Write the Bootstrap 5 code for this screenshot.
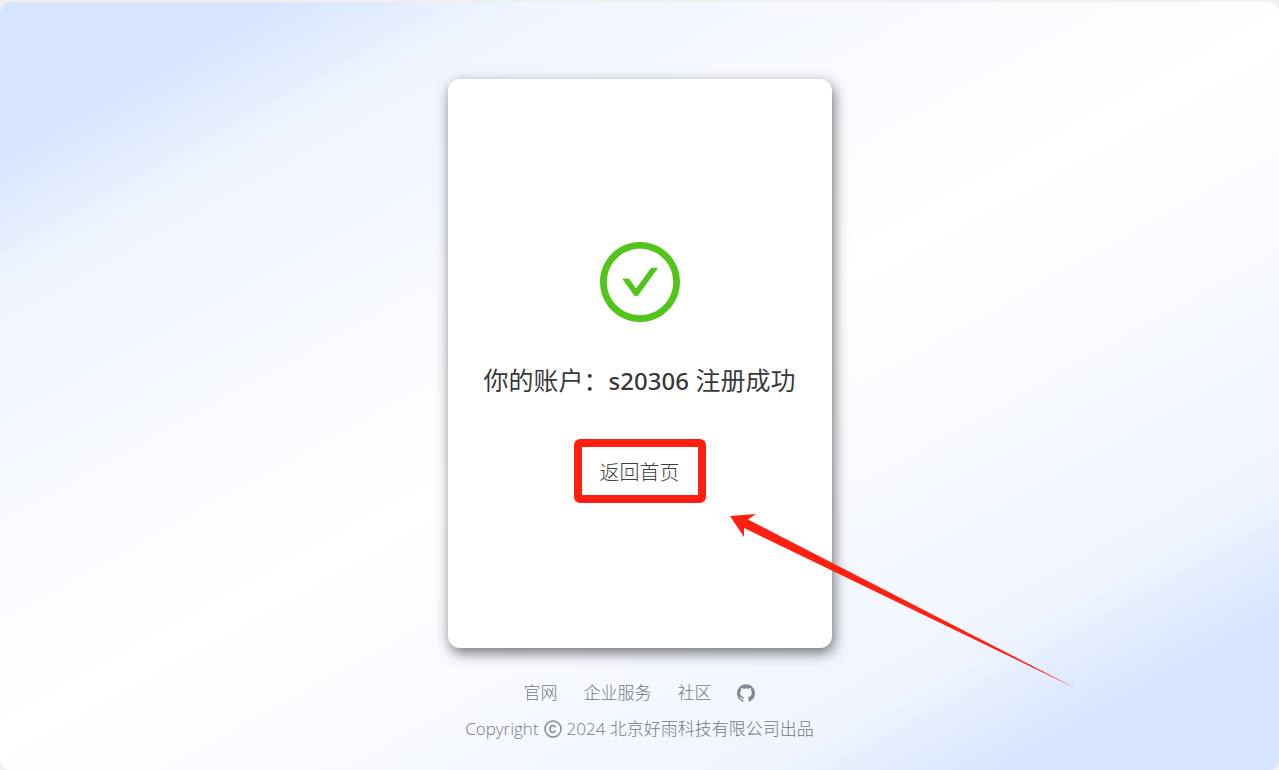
<!DOCTYPE html>
<html lang="zh-CN">
<head>
<meta charset="utf-8">
<meta name="viewport" content="width=device-width, initial-scale=1">
<title>注册成功</title>
<link href="https://cdn.jsdelivr.net/npm/bootstrap@5.3.0/dist/css/bootstrap.min.css" rel="stylesheet">
<style>
  body {
    background: #f0f0f0;
    font-family: "Open Sans", "Noto Sans CJK SC", sans-serif;
  }
  .page-frame {
    min-height: 100vh;
    border-top: 2px solid #f0f0f0;
    background: #f0f0f0;
  }
  .page-bg {
    border-radius: 10px;
    padding-top: 77px;
    background: linear-gradient(151deg, #d6e4ff 10%, #f0f5ff 20%, #fff 50%, #f0f5ff 80%, #d6e4ff 90%);
  }
  .result-card {
    width: 30%;
    min-width: 384px;
    min-height: 569px;
    padding-top: 18px;
    border-radius: 12px;
    box-shadow: 2px 5px 14px rgba(0, 0, 0, .55);
  }
  .result-icon { width: 80px; height: 80px; fill: #52c41a; }
  .result-title { font-size: 25px; line-height: 40px; margin: 38px 0; font-weight: 400; color: rgba(0, 0, 0, .8); }
  .result-title span { font-family: "Noto Sans", sans-serif; font-size: 24px; font-weight: 500; }
  .home-link {
    display: block;
    padding: 12px 18px 8px;
    border: 8px solid #ff2012;
    border-radius: 6px;
    font-size: 20px;
    font-weight: 300;
    line-height: 28px;
    color: #404040;
  }
  .arrow { left: 100%; top: 100%; margin: 11px 0 0 24px; fill: #ff2012; pointer-events: none; }
  .site-footer { font-size: 17px; font-weight: 300; line-height: 24px; color: #74777d; padding-top: 33px; }
  .site-footer ul { gap: 26px; }
  .site-footer a { color: inherit; }
  .copyright { gap: 5px; }
  .glyph { width: 18px; height: 18px; color: #85888e; }
</style>
</head>
<body>
<div class="page-frame d-flex flex-column">
  <div class="page-bg flex-grow-1 d-flex flex-column align-items-center">
    <main class="result-card bg-white d-flex flex-column align-items-center justify-content-center text-nowrap">
      <svg class="result-icon" viewBox="64 64 896 896" aria-hidden="true">
        <path d="M699 353h-46.900c-10.200 0-19.900 4.900-25.900 13.300L469 584.300l-71.200-98.800c-6-8.300-15.600-13.300-25.900-13.300H325c-6.500 0-10.300 7.400-6.500 12.700l124.600 172.800a31.800 31.800 0 0 0 51.700 0l210.600-292c3.900-5.300.1-12.700-6.400-12.700z"/>
        <path d="M512 64C264.600 64 64 264.600 64 512s200.600 448 448 448 448-200.600 448-448S759.400 64 512 64zm0 820c-205.400 0-372-166.600-372-372s166.600-372 372-372 372 166.600 372 372-166.600 372-372 372z"/>
      </svg>
      <h1 class="result-title">你的账户：<span>s20306</span> 注册成功</h1>
      <div class="position-relative">
        <a class="home-link text-decoration-none" href="#">返回首页</a>
        <svg class="arrow position-absolute" width="348" height="176" viewBox="0 0 348 176" aria-hidden="true">
          <path d="M0 2L26 0L18 5.500L347 175L14 14L14 23Z"/>
        </svg>
      </div>
    </main>
    <footer class="site-footer text-center">
      <ul class="list-unstyled d-flex justify-content-center align-items-center mb-0">
        <li><a class="text-decoration-none" href="#">官网</a></li>
        <li><a class="text-decoration-none" href="#">企业服务</a></li>
        <li><a class="text-decoration-none" href="#">社区</a></li>
        <li class="d-flex"><a class="d-flex" href="#" aria-label="GitHub">
          <svg class="glyph" viewBox="64 64 896 896" fill="currentColor" aria-hidden="true">
            <path d="M511.600 76.300C264.300 76.200 64 276.400 64 523.500 64 718.900 189.300 885 363.800 946c23.500 5.900 19.900-10.800 19.900-22.200v-77.500c-135.700 15.900-141.200-73.900-150.300-88.900C215 726 171.500 718 184.500 703c30.900-15.900 62.400 4 98.900 57.900 26.400 39.100 77.900 32.500 104 26 5.700-23.500 17.900-44.500 34.700-60.800-140.600-25.200-199.200-111-199.200-213 0-49.500 16.300-95 48.300-131.700-20.400-60.500 1.900-112.300 4.900-120 58.100-5.200 118.500 41.600 123.200 45.300 33-8.900 70.700-13.600 112.900-13.600 42.400 0 80.200 4.900 113.500 13.900 11.300-8.600 67.300-48.800 121.300-43.900 2.900 7.700 24.700 58.300 5.500 118 32.400 36.800 48.900 82.700 48.900 132.300 0 102.200-59 188.100-200 212.900a127.500 127.500 0 0 1 38.100 91v112.500c.8 9 0 17.900 15 17.900 177.100-59.700 304.600-227 304.600-424.100 0-247.200-200.400-447.300-447.500-447.300z"/>
          </svg>
        </a></li>
      </ul>
      <div class="copyright d-flex justify-content-center align-items-center mt-2 pt-1">
        <span>Copyright</span>
        <svg class="glyph" viewBox="0 0 18 18" fill="none" stroke="currentColor" stroke-width="1.500" role="img" aria-label="©">
          <circle cx="9" cy="9" r="8"/>
          <path d="M11.600 7.300A3 3.400 0 1 0 11.600 10.700"/>
        </svg>
        <span>2024 北京好雨科技有限公司出品</span>
      </div>
    </footer>
  </div>
</div>
<script src="https://cdn.jsdelivr.net/npm/bootstrap@5.3.0/dist/js/bootstrap.bundle.min.js"></script>
</body>
</html>
